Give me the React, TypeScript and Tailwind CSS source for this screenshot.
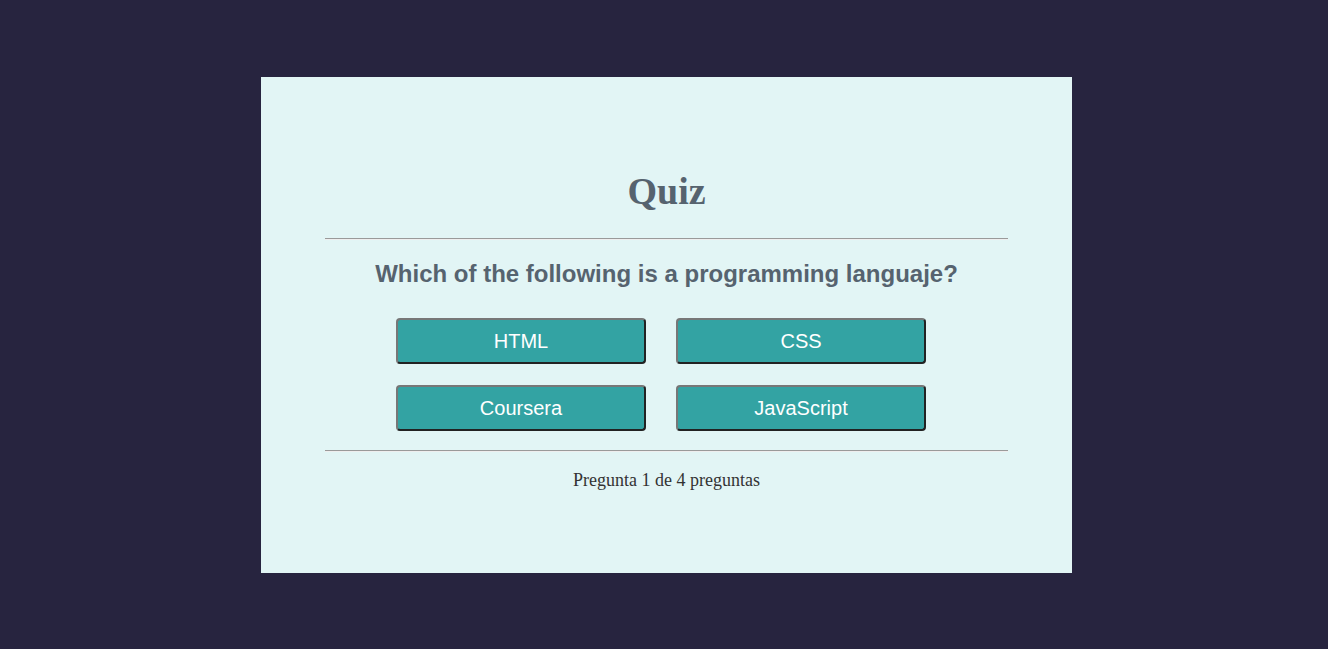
import React from 'react';

const options = ['HTML', 'CSS', 'Coursera', 'JavaScript'];

export default function App() {
  return (
    <div className="min-h-[649px] w-full bg-[#27243f] flex items-start justify-center pt-[77px] pl-[5px]">
      <div className="w-[811px] h-[496px] bg-[#e2f5f5] px-[64px] pt-[92px] flex flex-col items-center">
        <h1 className="font-['Liberation_Serif',serif] font-bold text-[38px] leading-[44px] text-[#56636f]">
          Quiz
        </h1>
        <div className="w-full mt-[25px] border-t border-t-[#9a9a9a] border-b border-b-[#eeeeee]" />
        <h2 className="mt-[20px] font-['Liberation_Sans',sans-serif] font-bold text-[24px] leading-[28px] text-[#56636f]">
          Which of the following is a programming languaje?
        </h2>
        <div className="mt-[30px] mr-[11px] grid grid-cols-[250px_250px] gap-x-[30px] gap-y-[21px]">
          {options.map((o) => (
            <button
              key={o}
              className="h-[46px] rounded-[4px] bg-[#33a3a3] border-2 border-t-[#777777] border-l-[#777777] border-b-[#222222] border-r-[#222222] text-white font-['Liberation_Sans',sans-serif] text-[20px]"
            >
              {o}
            </button>
          ))}
        </div>
        <div className="w-full mt-[19px] border-t border-t-[#9a9a9a] border-b border-b-[#eeeeee]" />
        <p className="mt-[18px] font-['Liberation_Serif',serif] text-[18px] leading-[21px] text-[#333333]">
          Pregunta 1 de 4 preguntas
        </p>
      </div>
    </div>
  );
}
